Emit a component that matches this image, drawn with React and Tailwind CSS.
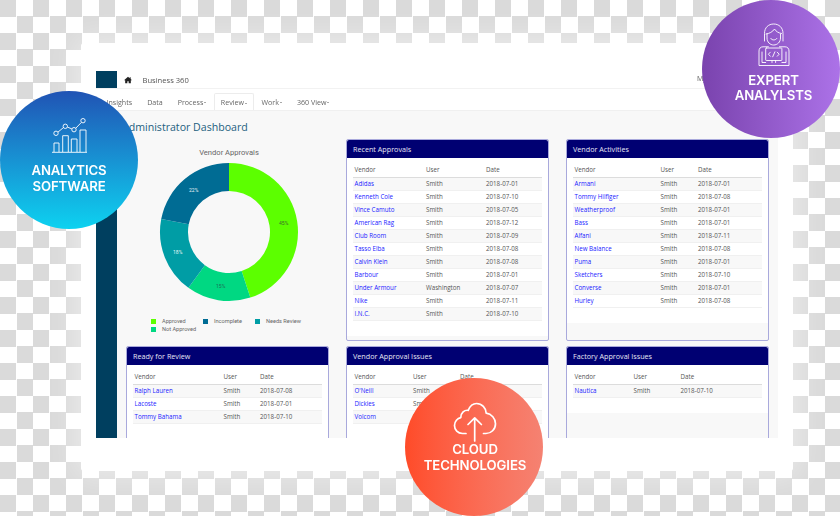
const FONT = "font-['Open_Sans',sans-serif]";

const panels = {
  recent: {
    title: "Recent Approvals",
    cols: ["w-[71.5px]", "w-[60px]", ""],
    rows: [
      ["Adidas", "Smith", "2018-07-01"],
      ["Kenneth Cole", "Smith", "2018-07-10"],
      ["Vince Camuto", "Smith", "2018-07-05"],
      ["American Rag", "Smith", "2018-07-12"],
      ["Club Room", "Smith", "2018-07-09"],
      ["Tasso Elba", "Smith", "2018-07-08"],
      ["Calvin Klein", "Smith", "2018-07-08"],
      ["Barbour", "Smith", "2018-07-01"],
      ["Under Armour", "Washington", "2018-07-07"],
      ["Nike", "Smith", "2018-07-11"],
      ["I.N.C.", "Smith", "2018-07-10"],
    ],
  },
  activities: {
    title: "Vendor Activities",
    cols: ["w-[86px]", "w-[37.5px]", ""],
    rows: [
      ["Armani", "Smith", "2018-07-01"],
      ["Tommy Hilfiger", "Smith", "2018-07-08"],
      ["Weatherproof", "Smith", "2018-07-01"],
      ["Bass", "Smith", "2018-07-01"],
      ["Alfani", "Smith", "2018-07-11"],
      ["New Balance", "Smith", "2018-07-08"],
      ["Puma", "Smith", "2018-07-01"],
      ["Sketchers", "Smith", "2018-07-10"],
      ["Converse", "Smith", "2018-07-01"],
      ["Hurley", "Smith", "2018-07-08"],
    ],
  },
  ready: {
    title: "Ready for Review",
    cols: ["w-[89px]", "w-[36.5px]", ""],
    rows: [
      ["Ralph Lauren", "Smith", "2018-07-08"],
      ["Lacoste", "Smith", "2018-07-01"],
      ["Tommy Bahama", "Smith", "2018-07-10"],
    ],
  },
  issues: {
    title: "Vendor Approval Issues",
    cols: ["w-[58.5px]", "w-[47px]", ""],
    rows: [
      ["O'Neill", "Smith", "2018-07-08"],
      ["Dickies", "Smith", "2018-07-01"],
      ["Volcom", "Smith", "2018-07-10"],
    ],
  },
  factory: {
    title: "Factory Approval Issues",
    cols: ["w-[59px]", "w-[47px]", ""],
    rows: [["Nautica", "Smith", "2018-07-10"]],
  },
};

function Panel({ data, className = "" }) {
  return (
    <section className={`flex flex-col rounded-[2px] border border-[#a9a9dc] bg-[#f8f8f8] ${className}`}>
      <h2 className="flex h-[18px] shrink-0 items-center rounded-t-[2px] bg-[#000072] pl-[6px] text-[7.2px] font-medium text-[#e6e6f4]">
        {data.title}
      </h2>
      <div className="bg-white px-[6px] pt-[5px] pb-[15px]">
        <table className="w-full table-fixed border-collapse text-[6.2px] text-[#555]">
          <thead>
            <tr className="h-[14px] border-b border-[#dcdcdc]">
              {["Vendor", "User", "Date"].map((h, i) => (
                <th key={h} className={`pl-[1.5px] text-left font-normal ${data.cols[i]}`}>{h}</th>
              ))}
            </tr>
          </thead>
          <tbody>
            {data.rows.map((r, i) => (
              <tr key={r[0]} className={`h-[13px] border-b border-[#f0f0f0] ${i % 2 === 0 ? "bg-[#f8f8f8]" : "bg-white"}`}>
                <td className="pt-[0.5px] pl-[1.5px] text-[#2222ff]">{r[0]}</td>
                <td className="pt-[0.5px] pl-[1.5px]">{r[1]}</td>
                <td className="pt-[0.5px] pl-[1.5px]">{r[2]}</td>
              </tr>
            ))}
          </tbody>
        </table>
      </div>
    </section>
  );
}

function polar(r, pct) {
  const a = (pct / 100) * 2 * Math.PI;
  return [r * Math.sin(a), -r * Math.cos(a)];
}

function Donut() {
  const R = 69;
  const r = 41;
  const slices = [
    { from: 0, to: 45, c: "#5cff00" },
    { from: 45, to: 60, c: "#00d882" },
    { from: 60, to: 78, c: "#009da5" },
    { from: 78, to: 100, c: "#006c94" },
  ];
  const labels = [
    { t: "45%", x: 284, y: 223, c: "#3d6b2a" },
    { t: "15%", x: 221, y: 286, c: "#1f6f57" },
    { t: "18%", x: 178, y: 252, c: "#e5f7f7" },
    { t: "22%", x: 194, y: 190, c: "#e5f2f7" },
  ];
  return (
    <svg width="150" height="150" viewBox="-75 -75 150 150" className="mx-auto block">
      {slices.map((s) => {
        const [x0, y0] = polar(R, s.from);
        const [x1, y1] = polar(R, s.to);
        const [x2, y2] = polar(r, s.to);
        const [x3, y3] = polar(r, s.from);
        const large = s.to - s.from > 50 ? 1 : 0;
        return (
          <path
            key={s.from}
            fill={s.c}
            d={`M${x0} ${y0}A${R} ${R} 0 ${large} 1 ${x1} ${y1}L${x2} ${y2}A${r} ${r} 0 ${large} 0 ${x3} ${y3}Z`}
          />
        );
      })}
      {labels.map((l) => (
        <text
          key={l.t}
          x={l.x - 229.3}
          y={l.y - 232}
          fill={l.c}
          fontSize="5"
          textAnchor="middle"
          dominantBaseline="central"
          fontFamily="Roboto, sans-serif"
        >
          {l.t}
        </text>
      ))}
    </svg>
  );
}

function Legend() {
  const items = [
    ["Approved", "bg-[#5cff00]"],
    ["Incomplete", "bg-[#006c94]"],
    ["Needs Review", "bg-[#009da5]"],
    ["Not Approved", "bg-[#00d882]"],
  ];
  return (
    <div className="mt-[10px] ml-[22px] flex w-[165px] flex-wrap font-['Roboto',sans-serif] text-[5.6px] text-[#666]">
      {items.map(([t, c]) => (
        <div key={t} className="flex h-[8px] w-[52px] items-center">
          <span className={`mr-[6px] h-[5px] w-[5px] ${c}`} />
          {t}
        </div>
      ))}
    </div>
  );
}

function AnalyticsIcon() {
  return (
    <svg width="37" height="36" viewBox="51 119 37 36" fill="none" stroke="#fff" strokeWidth="0.9">
      <path d="M52 153.3H87" />
      <path d="M54 153V144H59V153M62.7 153V136.7H68.3V153M71.3 153V140H77V153M80 153V131H86V153" />
      <path d="M58 133.1L63.4 128.6M67.5 128.1L71.8 129.9M75.8 129.2L81.3 123.5" />
      <circle cx="56" cy="134.3" r="2.2" />
      <circle cx="65.3" cy="127.3" r="2.2" />
      <circle cx="74" cy="130.7" r="2.2" />
      <circle cx="83" cy="121.7" r="2.2" />
    </svg>
  );
}

function ExpertIcon() {
  return (
    <svg width="34" height="44" viewBox="757 23 34 44" fill="none" stroke="#fff" strokeWidth="0.9" strokeLinecap="round" strokeLinejoin="round">
      <path d="M764.5 41V33.5C764.5 27.5 768.5 24 773.7 24S783 27.5 783 33.5V41" />
      <path d="M766 34C769.5 33.5 772.5 32 774.5 29C776 31.5 778.5 33 781.5 33.5" />
      <path d="M767 34V38C767 42 770 45 773.7 45S780.5 42 780.5 38V34" />
      <path d="M770.8 38.5C772 40.5 775.5 40.5 776.8 38.5" />
      <path d="M768.4 46.8H763C760.5 46.8 759 48.5 759 51V65.5H789V51C789 48.5 787.5 46.8 785 46.8H779.4" />
      <rect x="765.7" y="48" width="16.2" height="12.5" rx="0.6" />
      <path d="M765.7 62.5H762V52M781.9 62.5H786V52M772 60.5V62.5M775.6 60.5V62.5" />
      <path d="M770.3 52.2L768.4 54.2L770.3 56.2M777.3 52.2L779.2 54.2L777.3 56.2M774.9 51.8L772.7 56.8" />
    </svg>
  );
}

function CloudIcon() {
  return (
    <svg width="44" height="40" viewBox="453 402 44 40" fill="none" stroke="#fff" strokeWidth="1.7" strokeLinecap="round" strokeLinejoin="round">
      <path d="M466 433.5H462.5C457.8 433.5 454.5 430 454.5 425.5C454.5 421.3 457.5 418.2 460.8 417.6C460.8 412.6 464.5 409.8 468.2 410.3C470 406 473.2 403.5 476.5 403.5C482 403.5 486 408 486.2 413.2C491.5 413.8 495.5 418.5 495.5 423.8C495.5 429.4 491 433.5 486 433.5H483.5" />
      <path d="M474.7 441V418M468 424.5L474.7 417.8L481.4 424.5" />
    </svg>
  );
}

function Badge({ className, icon, lines, iconClass }) {
  return (
    <div className={`absolute flex h-[138px] w-[138px] flex-col items-center rounded-full text-white ${className}`}>
      <div className={iconClass}>{icon}</div>
      <p className="text-center font-['Inter',sans-serif] text-[13.2px] leading-[15.5px] font-semibold tracking-[-0.1px] blur-[0.25px]">
        {lines[0]}
        <br />
        {lines[1]}
      </p>
    </div>
  );
}

export default function App() {
  const nav = ["Insights", "Data", "Process", "Review", "Work", "360 View"];
  const caret = ["Process", "Review", "Work", "360 View"];
  return (
    <div className={`relative h-[516px] w-[840px] overflow-hidden bg-[conic-gradient(#fff_25%,#dadada_0_50%,#fff_0_75%,#dadada_0)] bg-[length:33px_33px] pt-[43px] ${FONT}`}>
      <div className="ml-[81px] h-[428px] w-[712px] rounded-[3px] bg-white px-[15px] pt-[28px] shadow-[0_0_30px_6px_rgba(255,255,255,0.45)]">
        <div className="h-full blur-[0.4px]">
          <header className="flex h-[18px] items-center border-b border-[#f2f2f2] text-[#555]">
            <div className="h-[17px] w-[21px] bg-[#003f5f]" />
            <svg width="8" height="8" viewBox="0 0 24 24" className="mr-[10.5px] ml-[7px]" fill="#222">
              <path d="M12 2L0 13h3.5v9H10v-6h4v6h6.5v-9H24l-4-3.7V4h-3v2.5z" />
            </svg>
            <span className="pt-[2px] text-[7.6px]">Business 360</span>
            <span className="mr-[43px] ml-auto pb-[1px] text-[7px]">My Account</span>
          </header>
          <nav className="flex h-[22px] items-end border-b border-[#f0f0f0] pl-[3px] text-[7.1px] text-[#666]">
            {nav.map((n) => (
              <div
                key={n}
                className={`flex h-[17px] items-center pt-[1px] ${n === "Review" ? "rounded-t-[2px] border border-b-0 border-[#ececec] bg-white px-[6px]" : "px-[7.5px]"}`}
              >
                {n}
                {caret.includes(n) && <span className="mb-[-1px] ml-[1px] h-0 w-0 border-x-[1.6px] border-t-[1.6px] border-x-transparent border-t-[#555]" />}
              </div>
            ))}
          </nav>
          <main className="flex h-[327px] overflow-hidden">
            <aside className="w-[21px] shrink-0 bg-[#003f5f]" />
            <div className="min-w-0 flex-1 bg-[#f8f8f8]">
              <h1 className="flex h-[28px] items-center pt-[5px] pl-[5px] text-[10.6px] font-normal text-[#23607f]">Administrator Dashboard</h1>
              <div className="ml-[9px] grid grid-cols-[203px_203px_203px] grid-rows-[202px_110px] gap-x-[17px] gap-y-[5px]">
                <div className="pl-[3px]">
                  <div className="pt-[8.5px] text-center font-['Roboto',sans-serif] text-[7.6px] leading-[9px] font-normal text-[#666]">Vendor Approvals</div>
                  <div className="mt-[0.5px]"><Donut /></div>
                  <Legend />
                </div>
                <Panel data={panels.recent} />
                <Panel data={panels.activities} />
                <Panel data={panels.ready} />
                <Panel data={panels.issues} />
                <Panel data={panels.factory} />
              </div>
            </div>
          </main>
        </div>
      </div>

      <Badge
        className="top-[91px] left-0 bg-gradient-to-b from-[#2053b4] to-[#0dd2f0]"
        iconClass="mt-[27px] mb-[9px]"
        icon={<AnalyticsIcon />}
        lines={["ANALYTICS", "SOFTWARE"]}
      />
      <Badge
        className="top-0 left-[702px] bg-gradient-to-r from-[#7a43ae] to-[#ac72e8] pl-[5px]"
        iconClass="mt-[23px] mb-[5.5px]"
        icon={<ExpertIcon />}
        lines={["EXPERT", "ANALYLSTS"]}
      />
      <Badge
        className="top-[378px] left-[404.5px] bg-gradient-to-r from-[#ff4b28] to-[#f58272] pl-[3px]"
        iconClass="mt-[24px] mb-0"
        icon={<CloudIcon />}
        lines={["CLOUD", "TECHNOLOGIES"]}
      />
    </div>
  );
}
